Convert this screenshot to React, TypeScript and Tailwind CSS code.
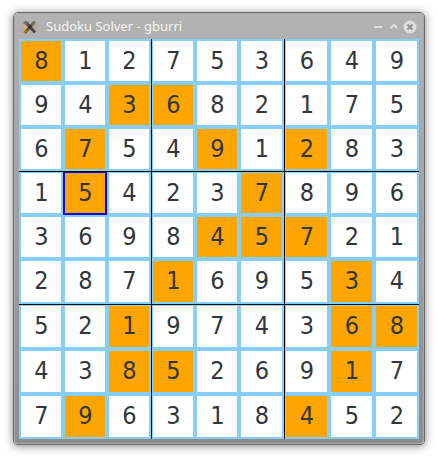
const rows = [
  '812753649',
  '943682175',
  '675491283',
  '154237896',
  '369845721',
  '287169534',
  '521974368',
  '438526917',
  '796318452',
];
const given = ['0', '23', '146', '15', '456', '37', '278', '237', '16'];

// Nine tracks per axis: the four extra pixels go to the last four.
const bandColumns = [
  'grid-cols-[40px_40px_40px] border-r pl-[2px] pr-[2px]',
  'grid-cols-[40px_40px_41px] border-r pl-px pr-[2px]',
  'grid-cols-[41px_41px_41px] pl-px pr-[2px]',
];
const bandRows = [
  'grid-rows-[40px_40px_40px] border-b pt-[2px] pb-[2px]',
  'grid-rows-[40px_40px_41px] border-b pt-px pb-[2px]',
  'grid-rows-[41px_41px_41px] pt-px pb-[2px]',
];

function Cell({ r, c }: { r: number; c: number }) {
  const isGiven = given[r].includes(String(c));
  const selected = r === 3 && c === 1;
  return (
    <div
      className={`relative flex items-center justify-center text-[25px] leading-none text-[#31363b] ${
        isGiven ? 'bg-[#ffa500]' : 'bg-white'
      }`}
    >
      <span className="pb-[2px] pl-px">{rows[r][c]}</span>
      {selected && (
        <div className="absolute -inset-x-[2px] -bottom-[2px] -top-px border-2 border-t border-[#0000ff]" />
      )}
    </div>
  );
}

function Box({ br, bc }: { br: number; bc: number }) {
  return (
    <div className={`grid gap-[4px] border-black ${bandColumns[bc]} ${bandRows[br]}`}>
      {[0, 1, 2].map((r) =>
        [0, 1, 2].map((c) => <Cell key={`${r}-${c}`} r={br * 3 + r} c={bc * 3 + c} />),
      )}
    </div>
  );
}

function AppIcon() {
  return (
    <svg className="h-4 w-4" viewBox="0 0 16 16" fill="none">
      <path d="M3.500 5Q0 8 2.500 12" stroke="#e6a45c" strokeWidth="1.6" />
      <path d="M12.500 4Q15.500 7 12.500 11" stroke="#c9a080" strokeWidth="1.2" />
      <path d="M2.500 14L11.500 4" stroke="#6d5426" strokeWidth="2.800" />
      <path d="M4.500 4L13 13.500" stroke="#4a4744" strokeWidth="3" />
      <path d="M1 4L4 1.500L7 4L5 6.500Z" fill="#6b6964" />
      <path d="M9 4L12.500 1.500L14 4L11 7Z" fill="#7c7466" />
      <path d="M6 7H10L9 10H7Z" fill="#343331" />
      <path d="M2 14L4.500 11.500" stroke="#b58a35" strokeWidth="1.5" />
    </svg>
  );
}

function TitleBar() {
  return (
    <div className="flex h-[25px] items-center pl-[3px] pr-px">
      <AppIcon />
      <span className="ml-[8px] font-['Noto_Sans',sans-serif] text-[13px] leading-none text-[#f4f4f4]">
        Sudoku Solver - gburri
      </span>
      <svg className="ml-auto h-4 w-12" viewBox="0 0 48 16" fill="none">
        <path d="M4 8H12" stroke="#dedede" strokeWidth="2" />
        <path d="M20.500 9.500L24 6L27.500 9.500" stroke="#dedede" strokeWidth="2" />
        <circle cx="40" cy="8" r="6.500" fill="#dedede" />
        <path d="M37.500 5.500L42.500 10.500M42.500 5.500L37.500 10.500" stroke="#929292" strokeWidth="2.200" />
      </svg>
    </div>
  );
}

export default function App() {
  return (
    <div className="h-[458px] w-[438px] overflow-hidden bg-white pl-[13px] pt-[12px]">
      <div className="h-[433px] w-[412px] rounded-[5px] rounded-b-[4px] border border-[#6b6b6b] shadow-[0_1px_9px_0_rgba(0,0,0,0.5)]">
        <div className="h-full rounded-[4px] rounded-b-[3px] border border-[#a9a9a9] bg-linear-to-b from-[#b2b2b2] to-[#8d8d8d] px-[4px]">
          <TitleBar />
          <div className="grid h-[400px] w-[400px] grid-cols-[133px_133px_134px] grid-rows-[133px_133px_134px] bg-[#87cefa] font-['DejaVu_Sans_Condensed','DejaVu_Sans',sans-serif] [font-stretch:condensed]">
            {[0, 1, 2].map((br) => [0, 1, 2].map((bc) => <Box key={`${br}-${bc}`} br={br} bc={bc} />))}
          </div>
        </div>
      </div>
    </div>
  );
}
